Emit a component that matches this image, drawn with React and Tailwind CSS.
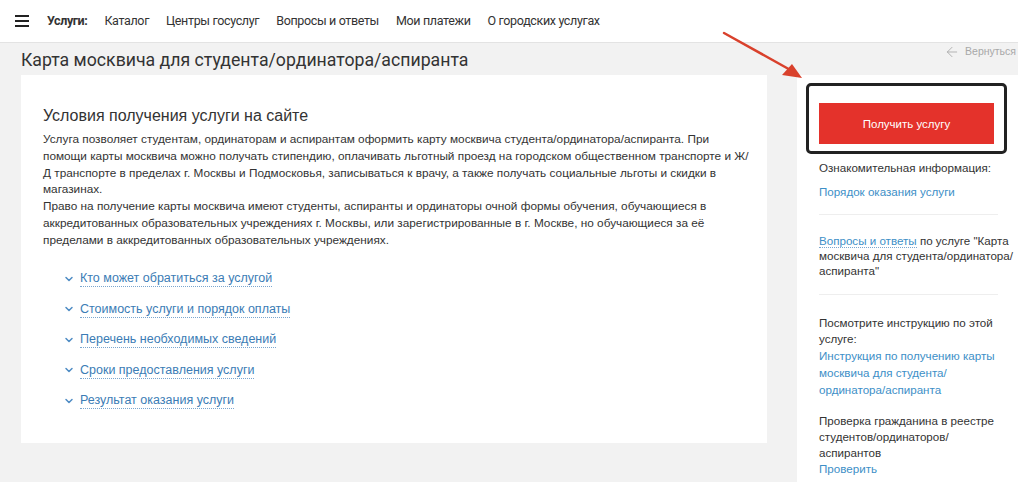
import { ArrowLeft, ChevronDown } from "lucide-react";

const nav = ["Каталог", "Центры госуслуг", "Вопросы и ответы", "Мои платежи", "О городских услугах"];

const sections = [
  "Кто может обратиться за услугой",
  "Стоимость услуги и порядок оплаты",
  "Перечень необходимых сведений",
  "Сроки предоставления услуги",
  "Результат оказания услуги",
];

function Header() {
  return (
    <div className="h-[43px] bg-white border-b border-[#e3e3e3] flex items-center pl-[15px] font-['Roboto',sans-serif] text-[12.5px] text-[#333]">
      <div className="flex flex-col gap-[3px] w-[14px] mr-[18px]">
        <span className="h-[2px] bg-[#222]" />
        <span className="h-[2px] bg-[#222]" />
        <span className="h-[2px] bg-[#222]" />
      </div>
      <span className="font-bold tracking-[-0.4px] mr-[17px]">Услуги:</span>
      <div className="flex gap-[17px] tracking-[-0.35px]">
        {nav.map((n) => (
          <span key={n}>{n}</span>
        ))}
      </div>
    </div>
  );
}

function Arrow() {
  return (
    <svg className="absolute left-[720px] top-[28px]" width="90" height="56" viewBox="0 0 90 56">
      <line x1="4" y1="5" x2="74" y2="44" stroke="#d9412c" strokeWidth="2.5" strokeLinecap="round" />
      <polygon points="82,50 62,47 72,36" fill="#d9412c" />
    </svg>
  );
}

export default function App() {
  return (
    <div className="relative w-[1018px] h-[485px] overflow-hidden bg-white font-['Liberation_Sans',Arial,sans-serif]">
      <Header />
      <div className="bg-[#f2f2f2] h-[439px] flex flex-col">
        <div className="flex items-center h-[32px] pl-[21px] pr-0">
          <h1 className="text-[17.7px] text-[#333] font-['Roboto',sans-serif] flex-1 pt-[2px]">
            Карта москвича для студента/ординатора/аспиранта
          </h1>
          <div className="flex items-center gap-[5px] text-[10.5px] text-[#a8a8a8] mr-[2px] -mt-[14px]">
            <ArrowLeft size={16} strokeWidth={1.3} />
            <span>Вернуться</span>
          </div>
        </div>
        <div className="flex flex-1 pl-[21px]">
          <div className="w-[746px] h-[368px] bg-white pl-[22px] pt-[31px]">
            <h2 className="text-[16px] text-[#333] leading-[20px] mb-[5px]">Условия получения услуги на сайте</h2>
            <p className="text-[11.8px] leading-[16.8px] text-[#333] w-[706px]">
              Услуга позволяет студентам, ординаторам и аспирантам оформить карту москвича студента/ординатора/аспиранта. При помощи карты москвича можно получать стипендию, оплачивать льготный проезд на городском общественном транспорте и Ж/<wbr />Д транспорте в пределах г. Москвы и Подмосковья, записываться к врачу, а также получать социальные льготы и скидки в магазинах.
              <br />
              Право на получение карты москвича имеют студенты, аспиранты и ординаторы очной формы обучения, обучающиеся в аккредитованных образовательных учреждениях г. Москвы, или зарегистрированные в г. Москве, но обучающиеся за её пределами в аккредитованных образовательных учреждениях.
            </p>
            <div className="mt-[21px] pl-[20px] flex flex-col gap-[12.6px]">
              {sections.map((s) => (
                <div key={s} className="flex items-center gap-[5px] h-[18px]">
                  <ChevronDown size={12} strokeWidth={3} className="text-[#4f8cc4]" />
                  <span className="text-[12.5px] text-[#3b7cb5] border-b border-dotted border-[#7aa6cf] leading-[16px]">{s}</span>
                </div>
              ))}
            </div>
          </div>
          <div className="ml-[30px] w-[221px] bg-white self-stretch pl-[22px] pr-[10px] text-[11.6px] leading-[16px] text-[#333]">
            <div className="-ml-[13px] mt-[8px] w-[201px] h-[71px] border-[3px] border-[#222] rounded-[5px] flex items-center justify-center">
              <div className="w-[175px] h-[41px] mt-[10px] bg-[#e4322b] flex items-center justify-center text-white text-[11.5px]">
                Получить услугу
              </div>
            </div>
            <div className="mt-[6px]">Ознакомительная информация:</div>
            <div className="mt-[8px] text-[#3d8fc7]">Порядок оказания услуги</div>
            <div className="mt-[14px] mr-[10px] border-t border-[#eeeeee]" />
            <div className="mt-[18px] leading-[15px] -mr-[10px] whitespace-nowrap">
              <span className="text-[#3d8fc7] border-b border-dotted border-[#7aa6cf]">Вопросы и ответы</span> по услуге "Карта
              <br />
              москвича для студента/ординатора/
              <br />
              аспиранта"
            </div>
            <div className="mt-[16px] mr-[10px] border-t border-[#eeeeee]" />
            <div className="mt-[20px]">
              Посмотрите инструкцию по этой
              <br />
              услуге:
            </div>
            <div className="text-[#3d8fc7] leading-[17px]">
              Инструкция по получению карты
              <br />
              москвича для студента/
              <br />
              ординатора/аспиранта
            </div>
            <div className="mt-[15px]">
              Проверка гражданина в реестре
              <br />
              студентов/ординаторов/
              <br />
              аспирантов
            </div>
            <div className="text-[#3d8fc7]">Проверить</div>
          </div>
        </div>
      </div>
      <Arrow />
    </div>
  );
}
